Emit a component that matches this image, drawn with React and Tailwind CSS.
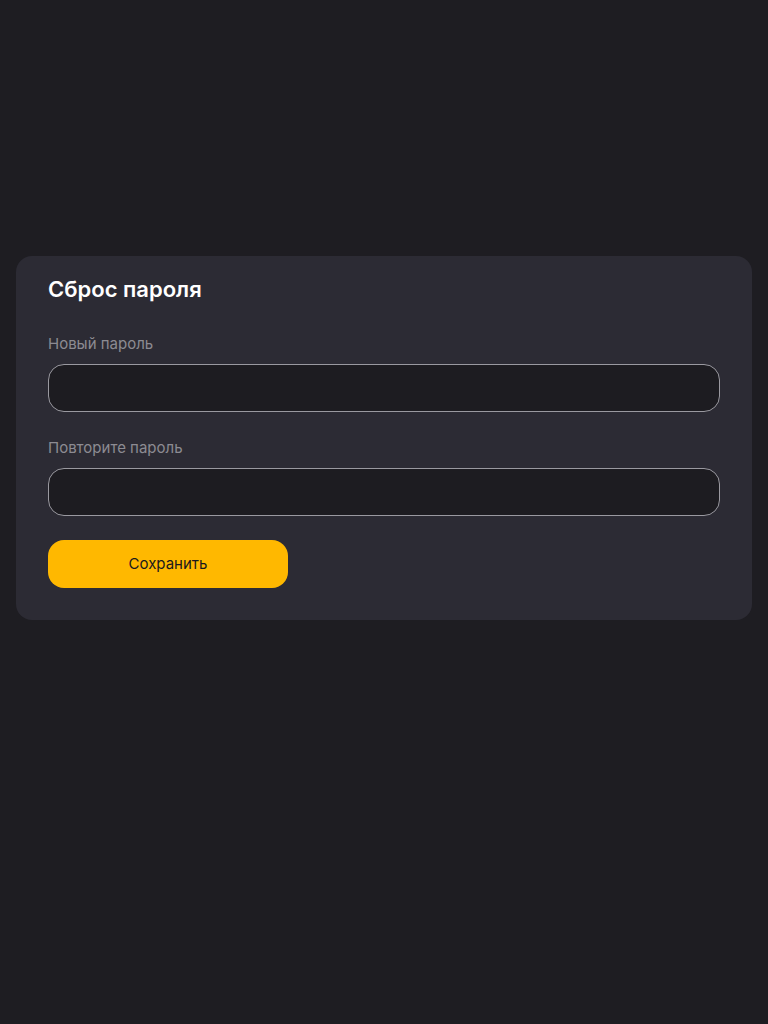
import { useState } from 'react';

const App = () => {
    const [password, setPassword] = useState('');
    const [repeat, setRepeat] = useState('');

    return (
        <div className="min-h-screen w-full bg-[#1e1d22] px-4 pt-64 font-['Inter','Noto_Sans',sans-serif]">
            <div className="rounded-2xl bg-[#2c2b34] px-8 pt-[19px] pb-8">
                <h2 className="text-[22px] leading-7 font-semibold text-white">Сброс пароля</h2>

                <form className="mt-[30px]" onSubmit={(e) => e.preventDefault()}>
                    <label htmlFor="new-password" className="mb-[9px] block text-[15px] leading-[22px] text-[#8c8b92]">
                        Новый пароль
                    </label>
                    <input
                        id="new-password"
                        type="password"
                        value={password}
                        onChange={(e) => setPassword(e.target.value)}
                        className="block h-12 w-full rounded-2xl border border-[#9a99a0] bg-[#1d1c21] px-4 text-sm text-white outline-none"
                    />

                    <label htmlFor="repeat-password" className="mt-[25px] mb-[9px] block text-[15px] leading-[22px] text-[#8c8b92]">
                        Повторите пароль
                    </label>
                    <input
                        id="repeat-password"
                        type="password"
                        value={repeat}
                        onChange={(e) => setRepeat(e.target.value)}
                        className="block h-12 w-full rounded-2xl border border-[#9a99a0] bg-[#1d1c21] px-4 text-sm text-white outline-none"
                    />

                    <button
                        type="submit"
                        className="mt-6 flex h-12 w-60 cursor-pointer items-center justify-center rounded-2xl bg-[#ffb800] text-[15px] text-[#1a191e]"
                    >
                        Сохранить
                    </button>
                </form>
            </div>
        </div>
    );
};

export default App;
